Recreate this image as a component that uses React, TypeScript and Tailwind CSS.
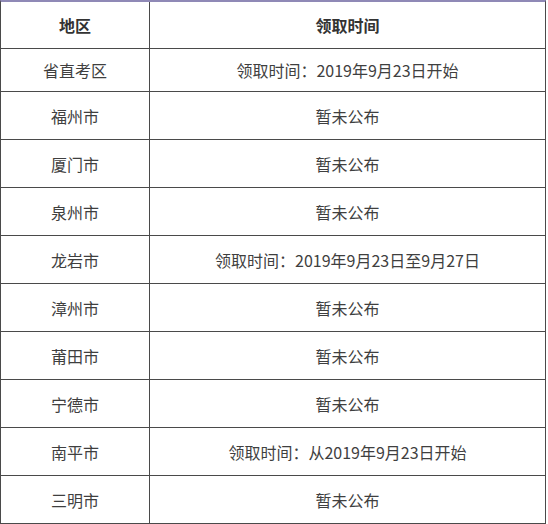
const rows = [
  { area: "省直考区", time: "领取时间：2019年9月23日开始" },
  { area: "福州市", time: "暂未公布" },
  { area: "厦门市", time: "暂未公布" },
  { area: "泉州市", time: "暂未公布" },
  { area: "龙岩市", time: "领取时间：2019年9月23日至9月27日" },
  { area: "漳州市", time: "暂未公布" },
  { area: "莆田市", time: "暂未公布" },
  { area: "宁德市", time: "暂未公布" },
  { area: "南平市", time: "领取时间：从2019年9月23日开始" },
  { area: "三明市", time: "暂未公布" },
];

export default function App() {
  return (
    <div className="w-[548px] h-[524px] bg-white font-['Microsoft_YaHei','Noto_Sans_CJK_SC',sans-serif] text-[16px] text-[#3f3f3f]">
      <div className="w-[546px] border-t-2 border-t-[#8f89b6] border-x border-b border-x-[#4a4a4a] border-b-[#4a4a4a]">
        <div className="grid grid-cols-[149px_1fr] h-[47px] border-b border-[#4a4a4a] font-bold text-[#333]">
          <div className="flex items-center justify-center border-r border-[#4a4a4a]">地区</div>
          <div className="flex items-center justify-center">领取时间</div>
        </div>
        {rows.map((r, i) => (
          <div
            key={r.area}
            className={`grid grid-cols-[149px_1fr] ${
              i === 0 ? "h-[43px] border-b" : i === rows.length - 1 ? "h-[47px]" : "h-[48px] border-b"
            } border-[#4a4a4a]`}
          >
            <div className="flex items-center justify-center border-r border-[#4a4a4a]">{r.area}</div>
            <div className="flex items-center justify-center">{r.time}</div>
          </div>
        ))}
      </div>
    </div>
  );
}
